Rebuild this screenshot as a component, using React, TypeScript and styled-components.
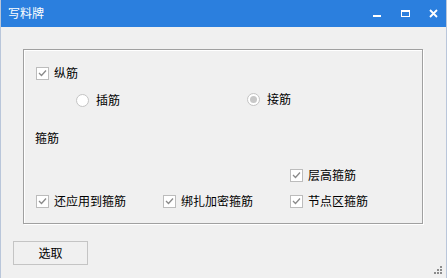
import React from 'react'
import styled, { createGlobalStyle } from 'styled-components'

const GlobalStyle = createGlobalStyle`
  html, body {
    margin: 0;
    padding: 0;
    background: #f0f0f0;
  }
  body {
    font-family: 'Noto Sans CJK SC', 'Microsoft YaHei', sans-serif;
    font-size: 12px;
    color: #000;
  }
`

const Window = styled.div`
  width: 447px;
  height: 278px;
  box-sizing: border-box;
  display: flex;
  flex-direction: column;
  background: #f0f0f0;
  border-left: 1px solid #b9c6da;
  border-right: 1px solid #b9c6da;
  position: relative;
  overflow: hidden;
`

const TitleBar = styled.header`
  height: 27px;
  margin: 0 -1px;
  background: #2b7fde;
  display: flex;
  align-items: center;
  padding-left: 8px;
  color: #fff;
  font-size: 12px;
  flex-shrink: 0;
`

const Title = styled.span`
  flex: 1;
  line-height: 16px;
  margin-top: -1px;
`

const Controls = styled.div`
  display: flex;
  align-items: center;
  height: 100%;
`

const Ctrl = styled.div`
  width: 28px;
  height: 27px;
  display: flex;
  align-items: center;
  justify-content: center;
`

const Body = styled.main`
  flex: 1;
  display: flex;
  flex-direction: column;
  padding: 22px 23px 0 22px;
`

const Group = styled.section`
  height: 175px;
  box-sizing: border-box;
  flex-shrink: 0;
  border: 1px solid #a0a0a0;
  box-shadow: inset 1px 1px 0 #fff, 1px 1px 0 #fff;
  display: flex;
  flex-direction: column;
  padding: 15px 0 0 12px;
`

const Row = styled.div<{ $gap: number; $indent?: number }>`
  display: flex;
  align-items: center;
  height: 16px;
  margin-top: ${(p) => p.$gap}px;
  padding-left: ${(p) => p.$indent ?? 0}px;
`

const Item = styled.label<{ $width?: number; $shift?: number }>`
  display: flex;
  align-items: center;
  gap: 5px;
  width: ${(p) => (p.$width ? `${p.$width}px` : 'auto')};
  position: relative;
  top: ${(p) => p.$shift ?? 0}px;
  white-space: nowrap;
  line-height: 16px;
`

const Box = styled.span`
  width: 13px;
  height: 13px;
  box-sizing: border-box;
  border: 1px solid #bcbcbc;
  background: #fff;
  display: flex;
  align-items: center;
  justify-content: center;
  flex-shrink: 0;
`

const Radio = styled.span<{ $checked?: boolean }>`
  width: 13px;
  height: 13px;
  box-sizing: border-box;
  border: 1px solid #c4c4c4;
  border-radius: 50%;
  background: #fff;
  display: flex;
  align-items: center;
  justify-content: center;
  flex-shrink: 0;
  margin-right: 2px;

  &::after {
    content: '';
    display: ${(p) => (p.$checked ? 'block' : 'none')};
    width: 7px;
    height: 7px;
    border-radius: 50%;
    background: #c8c8c8;
  }
`

const Label = styled.div`
  height: 16px;
  line-height: 16px;
  margin-left: -1px;
`

const Footer = styled.div`
  display: flex;
  margin: 17px 0 0 -10px;
`

const Button = styled.button`
  width: 75px;
  height: 24px;
  box-sizing: border-box;
  border: 1px solid #c4c4c4;
  background: #f0f0f0;
  font-family: inherit;
  font-size: 12px;
  line-height: 16px;
  color: #000;
  padding: 0;
`

const Grip = styled.svg`
  position: absolute;
  right: 3px;
  bottom: 3px;
`

const Check = () => (
  <svg width="9" height="8" viewBox="0 0 9 8">
    <path d="M1 4 L3.5 6.5 L8 1.5" fill="none" stroke="#8a8a8a" strokeWidth="1.3" />
  </svg>
)

const CheckItem = ({ text, width }: { text: string; width?: number }) => (
  <Item $width={width}>
    <Box>
      <Check />
    </Box>
    <span>{text}</span>
  </Item>
)

export default function App() {
  return (
    <>
      <GlobalStyle />
      <Window>
        <TitleBar>
          <Title>写料牌</Title>
          <Controls>
            <Ctrl>
              <svg width="8" height="8" viewBox="0 0 8 8">
                <rect x="0" y="5" width="8" height="2" fill="#fff" />
              </svg>
            </Ctrl>
            <Ctrl>
              <svg width="9" height="7" viewBox="0 0 9 7">
                <rect x="0.5" y="0.5" width="8" height="6" fill="none" stroke="#fff" />
                <rect x="0" y="0" width="9" height="2" fill="#fff" />
              </svg>
            </Ctrl>
            <Ctrl>
              <svg width="9" height="9" viewBox="0 0 9 9">
                <path d="M1 1 L8 8 M8 1 L1 8" stroke="#fff" strokeWidth="1.8" />
              </svg>
            </Ctrl>
          </Controls>
        </TitleBar>
        <Body>
          <Group>
            <Row $gap={0}>
              <CheckItem text="纵筋" />
            </Row>
            <Row $gap={11} $indent={40}>
              <Item $width={171}>
                <Radio />
                <span>插筋</span>
              </Item>
              <Item $shift={-1}>
                <Radio $checked />
                <span>接筋</span>
              </Item>
            </Row>
            <Row $gap={22}>
              <Label>箍筋</Label>
            </Row>
            <Row $gap={21} $indent={254}>
              <CheckItem text="层高箍筋" />
            </Row>
            <Row $gap={10}>
              <CheckItem text="还应用到箍筋" width={127} />
              <CheckItem text="绑扎加密箍筋" width={127} />
              <CheckItem text="节点区箍筋" />
            </Row>
          </Group>
          <Footer>
            <Button>选取</Button>
          </Footer>
        </Body>
        <Grip width="9" height="9" viewBox="0 0 9 9">
          <rect x="6" y="0" width="2" height="2" fill="#8c8c8c" />
          <rect x="3" y="3" width="2" height="2" fill="#8c8c8c" />
          <rect x="6" y="3" width="2" height="2" fill="#8c8c8c" />
          <rect x="0" y="6" width="2" height="2" fill="#8c8c8c" />
          <rect x="3" y="6" width="2" height="2" fill="#8c8c8c" />
          <rect x="6" y="6" width="2" height="2" fill="#8c8c8c" />
        </Grip>
      </Window>
    </>
  )
}
